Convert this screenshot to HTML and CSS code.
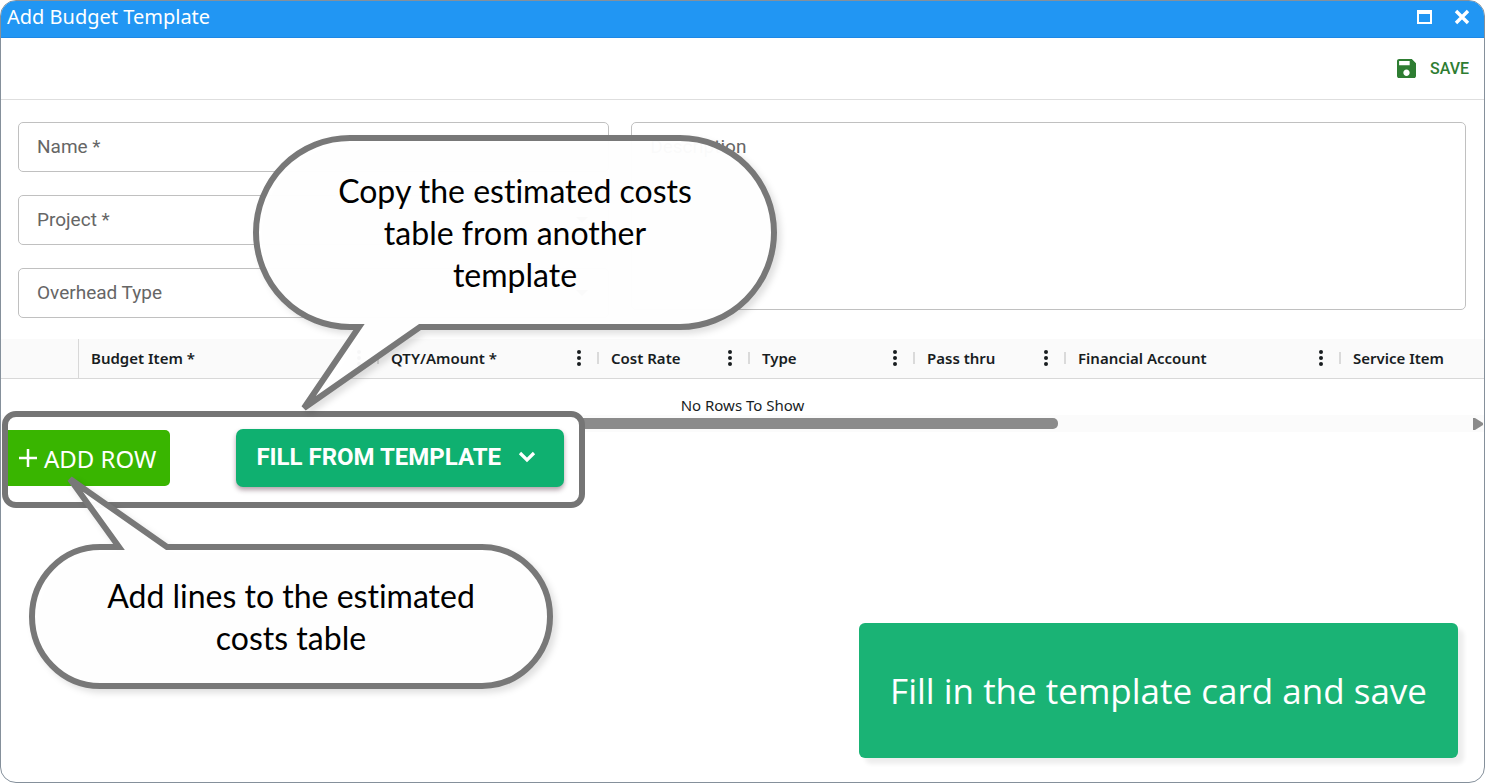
FILE: index.html
```html
<!DOCTYPE html>
<html lang="en">
<head>
<meta charset="utf-8">
<title>Add Budget Template</title>
<link rel="stylesheet" href="styles.css">
</head>
<body>
<main class="dialog">
  <header class="titlebar">
    <h1 class="title">Add Budget Template</h1>
    <button class="window-btn" type="button" aria-label="Maximize">
      <svg width="16" height="16" viewBox="0 0 16 16"><path d="M1 1h15v14H1zM3 5v8h11V5z" fill="#fff" fill-rule="evenodd"/></svg>
    </button>
    <button class="window-btn" type="button" aria-label="Close">
      <svg width="16" height="16" viewBox="0 0 16 16"><path d="M2 2l12 12M14 2L2 14" stroke="#fff" stroke-width="3.400" fill="none"/></svg>
    </button>
  </header>

  <div class="toolbar">
    <button class="save" type="button">
      <svg width="19" height="19" viewBox="3 3 18 18" aria-hidden="true"><path d="M17 3H5c-1.110 0-2 .9-2 2v14c0 1.100.890 2 2 2h14c1.100 0 2-.9 2-2V7l-4-4zm-5 16c-1.660 0-3-1.340-3-3s1.340-3 3-3 3 1.340 3 3-1.340 3-3 3zm3-10H5V5h10v4z" fill="#2e7d32"/></svg>
      SAVE
    </button>
  </div>

  <form class="form">
    <div class="fields">
      <div class="field">
        <label for="name">Name *</label>
        <input id="name" type="text">
      </div>
      <div class="field">
        <label for="project">Project *</label>
        <select id="project"></select>
        <svg class="arrow" width="12" height="6" viewBox="0 0 12 6" aria-hidden="true"><path d="M0 0h12L6 6z" fill="#757575"/></svg>
      </div>
      <div class="field">
        <label for="overhead">Overhead Type</label>
        <select id="overhead"></select>
        <svg class="arrow" width="12" height="6" viewBox="0 0 12 6" aria-hidden="true"><path d="M0 0h12L6 6z" fill="#757575"/></svg>
      </div>
    </div>
    <div class="field">
      <label for="description">Description</label>
      <textarea id="description"></textarea>
    </div>
  </form>

  <table class="grid">
    <colgroup>
      <col class="w-select"><col class="w-item"><col class="w-qty"><col class="w-rate"><col class="w-type"><col class="w-pass"><col class="w-account"><col>
    </colgroup>
    <thead>
      <tr>
        <th class="select-head"></th>
        <th><div class="head">Budget Item *<button class="menu" type="button" aria-label="Budget Item menu"><i></i><i></i><i></i></button></div></th>
        <th><div class="head">QTY/Amount *<button class="menu" type="button" aria-label="Quantity menu"><i></i><i></i><i></i></button></div></th>
        <th><div class="head">Cost Rate<button class="menu" type="button" aria-label="Cost Rate menu"><i></i><i></i><i></i></button></div></th>
        <th><div class="head">Type<button class="menu" type="button" aria-label="Type menu"><i></i><i></i><i></i></button></div></th>
        <th><div class="head">Pass thru<button class="menu" type="button" aria-label="Pass thru menu"><i></i><i></i><i></i></button></div></th>
        <th><div class="head">Financial Account<button class="menu" type="button" aria-label="Financial Account menu"><i></i><i></i><i></i></button></div></th>
        <th><div class="head last">Service Item</div></th>
      </tr>
    </thead>
    <tbody>
      <tr><td class="empty" colspan="8">No Rows To Show</td></tr>
    </tbody>
  </table>
  <div class="scrollbar">
    <div class="thumb"></div>
    <svg width="10" height="12" viewBox="0 0 10 12" aria-hidden="true"><path d="M0 0h2l8 5v2l-8 5H0z" fill="#8b8b8b"/></svg>
  </div>

  <div class="actions">
    <button class="add-row" type="button">
      <svg width="18" height="18" viewBox="0 0 18 18" aria-hidden="true"><path d="M9 0v18M0 9h18" stroke="#fff" stroke-width="2.500"/></svg>
      ADD ROW
    </button>
    <button class="fill" type="button">
      FILL FROM TEMPLATE
      <svg width="18" height="12" viewBox="0 0 18 12" aria-hidden="true"><path d="M2 2l7 7 7-7" stroke="#fff" stroke-width="3.200" fill="none"/></svg>
    </button>
  </div>

  <p class="banner">Fill in the template card and save</p>

  <aside class="callout copy">
    <svg class="bubble" width="530" height="286" viewBox="0 0 530 286" aria-hidden="true">
      <path d="M100 6H430A94 94.500 0 0 1 430 195H170L54 276L109 195H100A94 94.500 0 0 1 100 6Z"/>
    </svg>
    <p>Copy the estimated costs<br>table from another<br>template</p>
  </aside>
  <aside class="callout lines">
    <svg class="bubble" width="530" height="220" viewBox="0 0 530 220" aria-hidden="true">
      <path d="M74 73H93L44 5L141 73H456A68 69.500 0 0 1 456 212H74A68 69.500 0 0 1 74 73Z"/>
    </svg>
    <p>Add lines to the estimated<br>costs table</p>
  </aside>
</main>
</body>
</html>
```
FILE: styles.css
```css
* { box-sizing: border-box; }

body {
  margin: 0;
  background: #fff;
  font-family: "Noto Sans", "Open Sans", sans-serif;
  color: #181d1f;
}

button {
  margin: 0;
  padding: 0;
  border: 0;
  background: none;
  font: inherit;
  color: inherit;
}

.dialog {
  position: relative;
  display: flex;
  flex-direction: column;
  min-height: 100vh;
  border: 1px solid #85909b;
  border-radius: 16px;
  overflow: hidden;
}

.titlebar {
  display: flex;
  align-items: center;
  gap: 22px;
  height: 37px;
  padding: 0 14px 5px 6px;
  background: #2196f3;
  border-bottom: 1px solid #1e88e5;
  color: #fff;
}

.title {
  flex: 1;
  margin: 0;
  font-size: 20px;
  font-weight: 400;
}

.window-btn { display: flex; }

.toolbar {
  display: flex;
  justify-content: flex-end;
  align-items: center;
  height: 62px;
  padding-right: 15px;
  border-bottom: 1px solid #dedede;
}

.save {
  display: flex;
  align-items: center;
  gap: 14px;
  font: 500 16px Roboto, sans-serif;
  color: #2e7d32;
}

.form {
  display: grid;
  grid-template-columns: 17fr 24fr;
  align-items: start;
  gap: 22px;
  padding: 22px 18px 21px 17px;
}

.fields {
  display: grid;
  gap: 23px;
}

.field {
  display: grid;
  font: 19px/24px Roboto, sans-serif;
  color: #666;
}

.field > * { grid-area: 1 / 1; }

.field label {
  padding: 13px 19px;
  align-self: start;
  z-index: 1;
}

.field input,
.field select,
.field textarea {
  width: 100%;
  height: 50px;
  padding: 12px 18px;
  border: 1px solid #c0c0c0;
  border-radius: 5px;
  background: #fff;
  font: inherit;
  appearance: none;
  resize: none;
}

.field textarea { height: 188px; }

.arrow {
  place-self: center end;
  margin-right: 21px;
}

.grid {
  width: 100%;
  table-layout: fixed;
  border-collapse: separate;
  border-spacing: 0;
}

.w-select { width: 78px; }
.w-item { width: 300px; }
.w-qty { width: 220px; }
.w-rate { width: 151px; }
.w-type { width: 165px; }
.w-pass { width: 151px; }
.w-account { width: 275px; }

.grid th {
  height: 40px;
  padding: 0 0 2px;
  background: #fafafa;
  border-bottom: 1px solid #d8d8d8;
  font-size: 15px;
  font-weight: 600;
  text-align: left;
}

.grid .select-head { border-right: 1px solid #d8d8d8; }

.head {
  display: flex;
  align-items: center;
  justify-content: space-between;
  height: 12px;
  padding: 0 16px 0 12px;
  border-right: 2px solid #dadada;
  white-space: nowrap;
}

.head.last { border-right: 0; }

.menu {
  display: grid;
  gap: 2px;
}

.menu i {
  width: 4px;
  height: 4px;
  border-radius: 2px;
  background: #181d1f;
}

.grid .empty {
  height: 36px;
  padding: 15px 0 0;
  font-size: 15px;
  line-height: 20px;
  text-align: center;
}

.scrollbar {
  display: flex;
  align-items: center;
  justify-content: space-between;
  height: 17px;
  padding: 0 1px 0 17px;
  background: #fbfbfb;
}

.thumb {
  width: 71%;
  height: 11px;
  border-radius: 5px;
  background: #8b8b8b;
}

.actions {
  z-index: 1;
  display: flex;
  align-items: center;
  align-self: flex-start;
  gap: 66px;
  margin: -21px 0 0 1px;
  padding: 12px 15px 15px 0;
  border: 6px solid #757575;
  border-radius: 14px;
  background: #fff;
}

.add-row,
.fill {
  display: flex;
  align-items: center;
  color: #fff;
}

.add-row {
  gap: 7px;
  height: 56px;
  padding: 0 14px 0 11px;
  border-radius: 0 5px 5px 0;
  background: #39b500;
  font-size: 24px;
}

.fill {
  gap: 17px;
  height: 58px;
  padding: 0 28px 2px 20px;
  border-radius: 7px;
  background: #0fb070;
  box-shadow: 0 3px 5px rgba(60, 20, 40, 0.4);
  font: 700 24px Roboto, sans-serif;
}

.banner {
  align-self: flex-end;
  margin: auto 26px 24px;
  padding: 44px 31px 43px;
  border-radius: 6px;
  background: #1ab375;
  box-shadow: 6px 6px 4px rgba(0, 0, 0, 0.07);
  color: #fff;
  font-family: "Open Sans", sans-serif;
  font-size: 35px;
  line-height: 48px;
}

.callout {
  position: absolute;
  z-index: 2;
  color: #000;
  font: 32px/42px Lato, sans-serif;
  font-variant-ligatures: none;
  text-align: center;
}

.callout p {
  position: relative;
  margin: 0;
}

.copy {
  top: 131px;
  left: 249px;
  width: 530px;
  padding-top: 38px;
}

.lines {
  top: 473px;
  left: 25px;
  width: 530px;
  padding-top: 101px;
}

.bubble {
  position: absolute;
  top: 0;
  left: 0;
  overflow: visible;
  fill: rgba(255, 255, 255, 0.97);
  stroke: #787878;
  stroke-width: 6;
  stroke-miterlimit: 3;
  filter: drop-shadow(4px 4px 3px rgba(0, 0, 0, 0.12));
}
```
